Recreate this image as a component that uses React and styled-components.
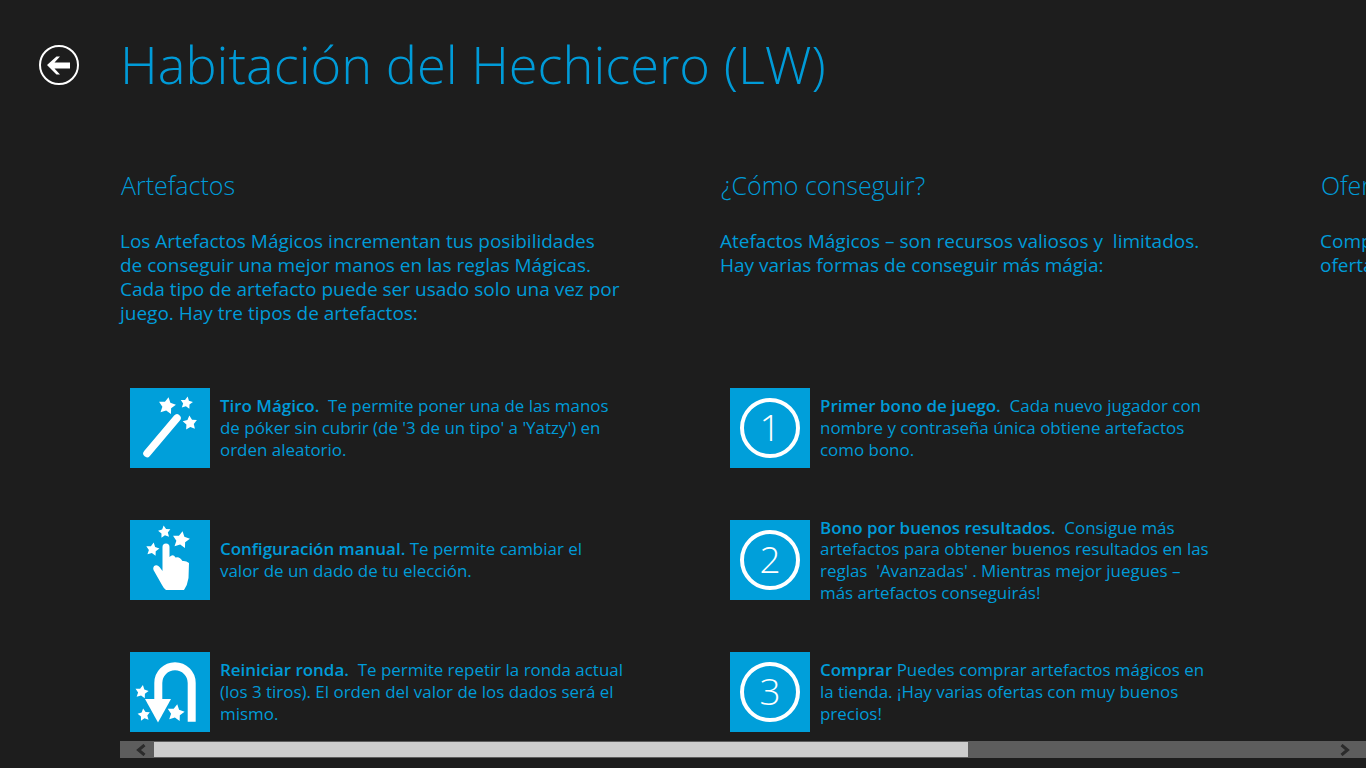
import styled, { createGlobalStyle } from 'styled-components'

const GlobalStyle = createGlobalStyle`
  html, body {
    margin: 0;
    padding: 0;
    background: #1d1d1d;
    overflow: hidden;
  }
`

const Page = styled.div`
  width: 1366px;
  height: 768px;
  overflow: hidden;
  background: #1d1d1d;
  color: #009bd8;
  font-family: "Open Sans", "Noto Sans", sans-serif;
  display: flex;
  flex-direction: column;
`

const Header = styled.header`
  display: flex;
  align-items: center;
  height: 130px;
  padding-left: 39px;
  gap: 41px;
  flex: none;
`

const BackButton = styled.button`
  width: 40px;
  height: 40px;
  padding: 0;
  border: 0;
  background: none;
  flex: none;
`

const Title = styled.h1`
  margin: 0 0 2px;
  font-size: 52.4px;
  font-weight: 300;
  white-space: nowrap;
  line-height: 70px;
`

const Columns = styled.main`
  display: flex;
  padding-left: 120px;
  height: 611px;
  flex: none;
`

const Column = styled.section`
  width: 600px;
  flex: none;
  display: flex;
  flex-direction: column;
`

const Heading = styled.h2`
  margin: 39px 0 0 1px;
  font-size: 25px;
  font-weight: 300;
  line-height: 32px;
  white-space: nowrap;
`

const Intro = styled.p`
  margin: 28px 0 0;
  height: 115px;
  font-size: 19px;
  line-height: 24px;
  white-space: pre;
`

const Features = styled.div`
  margin: 44px 0 0 10px;
  display: flex;
  flex-direction: column;
  gap: 52px;
`

const Feature = styled.article`
  display: flex;
  gap: 10px;
  height: 80px;
  align-items: center;
`

const Tile = styled.div`
  width: 80px;
  height: 80px;
  flex: none;
  background: #009fda;
  display: flex;
  align-items: center;
  justify-content: center;
`

const NumberRing = styled.div`
  width: 60px;
  height: 60px;
  box-sizing: border-box;
  border: 4px solid #fff;
  border-radius: 50%;
  color: #fff;
  font-size: 37px;
  font-weight: 300;
  line-height: 50px;
  text-align: center;
`

const Description = styled.p`
  margin: 0;
  font-size: 16.95px;
  line-height: 21.7px;
  white-space: pre;
`

const Strong = styled.strong`
  font-weight: 600;
`

const ScrollBar = styled.div`
  margin-left: 120px;
  height: 17px;
  background: #5d5d5d;
  display: flex;
  align-items: center;
  justify-content: space-between;
  flex: none;
`

const ScrollStart = styled.div`
  display: flex;
  align-items: center;
`

const ScrollArrow = styled.div`
  width: 34px;
  height: 17px;
  box-sizing: border-box;
  padding: ${({ $end }) => ($end ? '0 10px 0 0' : '0 0 0 8px')};
  display: flex;
  align-items: center;
  justify-content: center;
`

const ScrollThumb = styled.div`
  width: 814px;
  height: 15px;
  background: #cdcdcd;
`

// five pointed star centred on cx,cy
function Star({ cx, cy, r, tilt = 0 }) {
  const points = []
  for (let i = 0; i < 10; i++) {
    const radius = i % 2 === 0 ? r : r * 0.52
    const angle = ((-90 + tilt + i * 36) * Math.PI) / 180
    points.push(`${(cx + radius * Math.cos(angle)).toFixed(2)},${(cy + radius * Math.sin(angle)).toFixed(2)}`)
  }
  return <polygon points={points.join(' ')} fill="#fff" />
}

function WandIcon() {
  return (
    <svg width="80" height="80" viewBox="0 0 80 80">
      <line x1="17" y1="65.5" x2="47" y2="30" stroke="#fff" strokeWidth="7.5" strokeLinecap="round" />
      <Star cx={37} cy={18} r={9} tilt={10} />
      <Star cx={56.5} cy={15} r={6.5} tilt={10} />
      <Star cx={60} cy={35} r={7.5} tilt={-5} />
    </svg>
  )
}

function HandIcon() {
  return (
    <svg width="80" height="80" viewBox="0 0 80 80">
      <path
        d="M32.5 27 A3.5 3.5 0 0 1 39.5 27 V37 Q43 33.5 45.5 37.5 Q49.5 36 52.5 41 Q56 40.5 59 43 L58.5 58 Q57.5 65 54 70 H36 Q34 69 32 65 L23.5 50 Q22.5 47 25 45.5 Q27.5 44.5 29.5 47 L32.5 51 Z"
        fill="#fff"
      />
      <Star cx={34.5} cy={12} r={6.5} tilt={-8} />
      <Star cx={51} cy={20} r={9} tilt={10} />
      <Star cx={22.5} cy={29.5} r={7} tilt={10} />
    </svg>
  )
}

function UTurnIcon() {
  return (
    <svg width="80" height="80" viewBox="0 0 80 80">
      <path d="M61.7 69.7 V31 A16.7 16.7 0 0 0 28.3 31 V55" fill="none" stroke="#fff" strokeWidth="8" />
      <polygon points="15,47 41,47 28,70.5" fill="#fff" />
      <Star cx={11.7} cy={40} r={7} tilt={10} />
      <Star cx={14} cy={63} r={6.5} tilt={-8} />
      <Star cx={45.7} cy={61} r={9} tilt={10} />
    </svg>
  )
}

function BackIcon() {
  return (
    <svg width="40" height="40" viewBox="0 0 40 40">
      <circle cx="20" cy="20" r="19" fill="none" stroke="#fff" strokeWidth="2" />
      <path d="M8 20 L17.5 11.5 H21 L15.5 17.5 H31 V23.5 H15.5 L21 29.5 H17.5 Z" fill="#fff" />
    </svg>
  )
}

function Chevron({ flip }) {
  return (
    <svg width="11" height="12" viewBox="0 0 11 12">
      <path
        d={flip ? 'M2.5 1 L8.5 6 L2.5 11' : 'M8.5 1 L2.5 6 L8.5 11'}
        fill="none"
        stroke="#2b2b2b"
        strokeWidth="3"
      />
    </svg>
  )
}

const artefacts = [
  {
    icon: <WandIcon />,
    title: 'Tiro Mágico.',
    lines: ['  Te permite poner una de las manos', "de póker sin cubrir (de '3 de un tipo' a 'Yatzy') en", 'orden aleatorio.'],
  },
  {
    icon: <HandIcon />,
    title: 'Configuración manual.',
    lines: [' Te permite cambiar el', 'valor de un dado de tu elección.'],
  },
  {
    icon: <UTurnIcon />,
    title: 'Reiniciar ronda.',
    lines: ['  Te permite repetir la ronda actual', '(los 3 tiros). El orden del valor de los dados será el', 'mismo.'],
  },
]

const ways = [
  {
    number: 1,
    title: 'Primer bono de juego.',
    lines: ['  Cada nuevo jugador con', 'nombre y contraseña única obtiene artefactos', 'como bono.'],
  },
  {
    number: 2,
    title: 'Bono por buenos resultados.',
    lines: ['  Consigue más', 'artefactos para obtener buenos resultados en las', "reglas  'Avanzadas' . Mientras mejor juegues –", 'más artefactos conseguirás!'],
  },
  {
    number: 3,
    title: 'Comprar',
    lines: [' Puedes comprar artefactos mágicos en', 'la tienda. ¡Hay varias ofertas con muy buenos', 'precios!'],
  },
]

function FeatureRow({ tile, title, lines }) {
  return (
    <Feature>
      <Tile>{tile}</Tile>
      <Description>
        <Strong>{title}</Strong>
        {lines.map((line, i) => (
          <span key={i}>
            {i > 0 && <br />}
            {line}
          </span>
        ))}
      </Description>
    </Feature>
  )
}

export default function App() {
  return (
    <Page>
      <GlobalStyle />
      <Header>
        <BackButton aria-label="Volver">
          <BackIcon />
        </BackButton>
        <Title>Habitación del Hechicero (LW)</Title>
      </Header>
      <Columns>
        <Column>
          <Heading>Artefactos</Heading>
          <Intro>
            Los Artefactos Mágicos incrementan tus posibilidades
            <br />
            de conseguir una mejor manos en las reglas Mágicas.
            <br />
            Cada tipo de artefacto puede ser usado solo una vez por
            <br />
            juego. Hay tre tipos de artefactos:
          </Intro>
          <Features>
            {artefacts.map((item) => (
              <FeatureRow key={item.title} tile={item.icon} title={item.title} lines={item.lines} />
            ))}
          </Features>
        </Column>
        <Column>
          <Heading>¿Cómo conseguir?</Heading>
          <Intro>
            Atefactos Mágicos – son recursos valiosos y  limitados.
            <br />
            Hay varias formas de conseguir más mágia:
          </Intro>
          <Features>
            {ways.map((item) => (
              <FeatureRow
                key={item.title}
                tile={<NumberRing>{item.number}</NumberRing>}
                title={item.title}
                lines={item.lines}
              />
            ))}
          </Features>
        </Column>
        <Column>
          <Heading>Ofertas</Heading>
          <Intro>
            Comprar
            <br />
            ofertas
          </Intro>
        </Column>
      </Columns>
      <ScrollBar>
        <ScrollStart>
          <ScrollArrow>
            <Chevron />
          </ScrollArrow>
          <ScrollThumb />
        </ScrollStart>
        <ScrollArrow $end>
          <Chevron flip />
        </ScrollArrow>
      </ScrollBar>
    </Page>
  )
}
